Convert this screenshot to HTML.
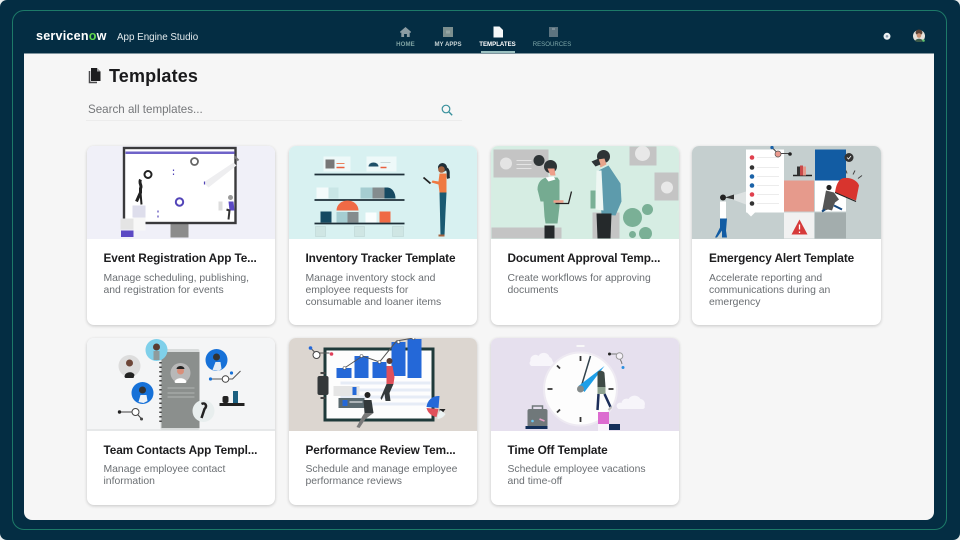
<!DOCTYPE html>
<html lang="en"><head><meta charset="utf-8"><title>Templates</title>
<style>
html,body{margin:0;padding:0;width:960px;height:540px;overflow:hidden;background:#e9eeee;font-family:"Liberation Sans",sans-serif}
*{box-sizing:border-box}
#page{position:absolute;left:0;top:0;width:960px;height:540px;filter:blur(.35px)}
.abs,.card,.t,.d,svg.ill{position:absolute}
#frame{left:0;top:0;width:960px;height:540px;background:#042d43;border-radius:7px}
#line{left:12px;top:10px;width:935px;height:520px;border:1px solid #1d7a68;border-radius:12px}
#app{left:24px;top:53px;width:910px;height:467px;background:#f6f6f6;border-radius:0 0 8px 8px;border-top:1px solid #7f949e}
.nav{position:absolute;top:41px;font-size:6.1px;font-weight:bold;text-align:center;white-space:nowrap;transform:translateX(-50%)}
.card{width:188.5px;background:#fff;border-radius:7px;box-shadow:0 1px 3px rgba(0,0,0,.2);overflow:hidden}
.card svg{position:absolute;left:0;top:0;display:block}
.t{left:17px;font-size:11.8px;letter-spacing:-.1px;font-weight:bold;color:#1c1c1e;white-space:nowrap;line-height:15px}
.d{left:17px;font-size:10.4px;color:#6b6f73;line-height:12px;white-space:nowrap}
</style></head><body>
<div id="page">
<div class="abs" id="frame"></div>
<div class="abs" id="line"></div>
<div class="abs" id="app"></div>

<div class="abs" style="left:36px;top:29px;font-size:12.6px;font-weight:bold;color:#fff;letter-spacing:.2px;line-height:15px">servicen<span style="color:#62d84e">o</span>w</div>
<div class="abs" style="left:117px;top:31px;font-size:9.8px;color:#e4ebee;line-height:13px">App Engine Studio</div>

<svg class="abs" style="left:385px;top:24px" width="190" height="16" viewBox="385 24 190 16">
<path d="M405.5 27l-5.5 4.8v.8h1.3V37h2.8v-3h2.800v3h2.800v-4.400h1.300v-.8z" fill="#8b9ca3"/>
<rect x="443" y="27" width="10" height="10" fill="#7c8f8f"/><rect x="446" y="30.500" width="4" height="3" fill="#96a6a4"/>
<path d="M493.500 26.500h6l3.500 3.500v7.500h-9.500z" fill="#f5f8f9"/>
<rect x="549" y="27" width="9" height="10" fill="#5d7480"/><rect x="552" y="28" width="3" height="2" fill="#7d909a"/>
</svg>
<div class="nav" style="left:405.500px;color:#7fa3a3;letter-spacing:.1px">HOME</div>
<div class="nav" style="left:448px;color:#c5d2d4">MY APPS</div>
<div class="nav" style="left:497.500px;color:#fff">TEMPLATES</div>
<div class="nav" style="left:552px;color:#7fa8aa;font-weight:normal">RESOURCES</div>
<div class="abs" style="left:481px;top:51px;width:34px;height:2px;background:#9bc0c0"></div>

<svg class="abs" style="left:880px;top:26px" width="50" height="20" viewBox="880 26 50 20">
<circle cx="887" cy="36.300" r="3.500" fill="#eef2f4"/><circle cx="887" cy="36.300" r="1.300" fill="#8f9fb0"/>
<circle cx="919" cy="36" r="6" fill="#e6e2dc"/><path d="M915.500 33a3.500 3.500 0 0 1 7 0l-1 1.500h-5z" fill="#5a4034"/><circle cx="919" cy="35.500" r="2.300" fill="#c98f72"/><path d="M915 41c1-3 7-3 8 0l-2 1h-4z" fill="#3c5a4a"/><circle cx="923.500" cy="40.500" r="1.300" fill="#62c370"/>
</svg>

<svg class="abs" style="left:86px;top:66px" width="16" height="18" viewBox="0 0 16 18">
<path d="M5 2h6l3.500 3.500V15H5z" fill="#1d1d1f"/><path d="M3.500 5v11.500H11" fill="none" stroke="#4b4b4d" stroke-width="1.500"/><path d="M11 2v3.500h3.500z" fill="#f6f6f6" opacity=".6"/>
</svg>
<div class="abs" style="left:109px;top:65px;font-size:18px;font-weight:bold;color:#1a1a1c;line-height:22px;letter-spacing:.15px">Templates</div>
<div class="abs" style="left:88px;top:102px;font-size:11.6px;color:#75777a;line-height:15px">Search all templates...</div>
<svg class="abs" style="left:440px;top:103px" width="14" height="14" viewBox="0 0 14 14"><circle cx="6" cy="6" r="3.800" fill="none" stroke="#38909c" stroke-width="1.200"/><path d="M9 9l3.200 3.200" stroke="#38909c" stroke-width="1.400"/></svg>
<div class="abs" style="left:86px;top:120px;width:376px;height:1px;background:#ececec"></div>

<!-- Card 1 -->
<div class="card" style="left:86.500px;top:145.500px;height:179px">
<svg width="189" height="93" viewBox="86.500 145.500 189 93">
<rect x="86" y="145" width="190" height="94" fill="#f0f0f8"/>
<rect x="170" y="222" width="18" height="15" fill="#8c8c8c"/>
<rect x="123.500" y="147.500" width="111.500" height="75" fill="#fff" stroke="#3a3a3c" stroke-width="2.400"/>
<rect x="125" y="151" width="109" height="2.500" fill="#6f63c8"/>
<path d="M203 182l30-20 3 3-28 22z" fill="#eeeef0"/><path d="M234 156l4 4" stroke="#777" stroke-width="2"/>
<circle cx="147.500" cy="174" r="3.500" fill="none" stroke="#222" stroke-width="2"/>
<circle cx="194" cy="161" r="3.500" fill="none" stroke="#666" stroke-width="1.800"/>
<circle cx="179" cy="201.500" r="3.700" fill="none" stroke="#5345b8" stroke-width="2"/>
<path d="M173 169v1.500M173 173v1.500M157.500 210v2M157.500 215v2M204 181v3" stroke="#5345b8" stroke-width="1.200"/>
<path d="M140 179c-2 4 2 6 0 9v4l-4 9" stroke="#222" stroke-width="3" fill="none"/><path d="M140 192l1 12" stroke="#222" stroke-width="2"/>
<rect x="132" y="205" width="13" height="12" fill="#dedeec"/>
<rect x="120" y="218" width="13" height="11" fill="#e4e4e4"/><rect x="133" y="217" width="12" height="13" fill="#f7f7f7"/>
<rect x="120.500" y="230" width="12.500" height="6.500" fill="#5b49c4"/>
<circle cx="230" cy="197" r="2.500" fill="#9a9a9a"/><path d="M228 201h5l1 9h-5z" fill="#5b49c4"/><path d="M226 209l3 1 -1 9" stroke="#333" stroke-width="2" fill="none"/><rect x="218" y="201" width="4" height="9" fill="#ddd"/>
</svg>
<div class="t" style="top:105px">Event Registration App Te...</div>
<div class="d" style="top:127px">Manage scheduling, publishing,<br>and registration for events</div>
</div>

<!-- Card 2 -->
<div class="card" style="left:288.500px;top:145.500px;height:179px">
<svg width="189" height="93" viewBox="288.500 145.500 189 93">
<rect x="288" y="145" width="190" height="94" fill="#d8f1f1"/>
<rect x="323" y="156" width="27" height="15" fill="#eef9f9"/><rect x="325" y="159" width="9" height="9" fill="#777"/><path d="M336 163h8" stroke="#e9825e" stroke-width="1"/><path d="M336 167h8" stroke="#e9603f" stroke-width="1.400"/>
<rect x="366" y="156" width="30" height="15" fill="#eef9f9"/><path d="M368 166a5 4 0 0 1 10 0z" fill="#1e5068"/><path d="M380 167h6" stroke="#e9603f" stroke-width="1.400"/><path d="M380 162h10" stroke="#c9d8d8" stroke-width="1"/>
<path d="M314 174h90M314 199.500h90M314 223h90" stroke="#1e2f38" stroke-width="1.800"/>
<rect x="316" y="187" width="12" height="11" fill="#f4fbfb"/><rect x="328" y="187" width="10" height="11" fill="#c9e6e6"/>
<rect x="360" y="187" width="12" height="11" fill="#a5cdd1"/><rect x="372" y="187" width="12" height="11" fill="#848c8e"/>
<path d="M384 187h3a8 11 0 0 1 8 11h-11z" fill="#164a62"/>
<rect x="320" y="211" width="11" height="11" fill="#164a62"/>
<path d="M336 210a11 10 0 0 1 22 0z" fill="#ef6a45"/><rect x="336" y="211.500" width="11" height="10.500" fill="#a5cdd1"/><rect x="347" y="211.500" width="11" height="10.500" fill="#848c8e"/>
<rect x="365" y="212" width="11" height="10" fill="#fafefe"/><rect x="379" y="211" width="11" height="11" fill="#ef6a45"/>
<g fill="#cfe6e4" stroke="#b8d2d0" stroke-width=".5"><rect x="315" y="226" width="10" height="10"/><rect x="354" y="226" width="10" height="10"/><rect x="392" y="226" width="11" height="10"/></g>
<circle cx="442" cy="167" r="4.500" fill="#1e2f38"/><circle cx="441" cy="169" r="3.300" fill="#a3623f"/><path d="M446 168c3 3 1 6 2 10" stroke="#1e2f38" stroke-width="3" fill="none"/>
<path d="M439 173h7v19h-7l-1-8-7-2 1-2 6 1z" fill="#ef7a42"/>
<path d="M439 192h7l-1 20-1 23h-4z" fill="#1a5a72"/><path d="M438 235h6" stroke="#a3623f" stroke-width="2"/>
<path d="M423 177l7 6" stroke="#222" stroke-width="1.800"/>
</svg>
<div class="t" style="top:105px">Inventory Tracker Template</div>
<div class="d" style="top:127px">Manage inventory stock and<br>employee requests for<br>consumable and loaner items</div>
</div>

<!-- Card 3 -->
<div class="card" style="left:490.500px;top:145.500px;height:179px">
<svg width="189" height="93" viewBox="490.500 145.500 189 93">
<rect x="490" y="145" width="190" height="94" fill="#d6ede3"/>
<rect x="493" y="149" width="55" height="28" fill="#c4c4c4"/><circle cx="505.500" cy="163" r="6" fill="#e4e4e4"/><path d="M516 160h15M516 164h15M516 168h15" stroke="#e4e4e4"/>
<rect x="629" y="146" width="27" height="19" fill="#c4c4c4"/><circle cx="642" cy="153" r="7.500" fill="#e8e8e8"/>
<rect x="654" y="172" width="24" height="28" fill="#c4c4c4"/><circle cx="666.500" cy="187" r="6" fill="#e8e8e8"/>
<rect x="491" y="227" width="70" height="11" fill="#c4c4c4"/>
<rect x="592" y="212" width="27" height="26" fill="#c4c4c4"/>
<circle cx="632" cy="217" r="9.500" fill="#7ab096"/><circle cx="647" cy="209" r="5.500" fill="#7ab096"/><circle cx="645" cy="233" r="6.500" fill="#7ab096"/><circle cx="632" cy="234" r="3.500" fill="#7ab096"/>
<circle cx="538.500" cy="160" r="5.500" fill="#2e3436"/><circle cx="550" cy="166" r="6.500" fill="#2e3436"/><path d="M547 168h7l1 7h-5z" fill="#ee9f8a"/>
<path d="M546 177c-5 1-9 5-9 12l3 12 3 0 1 15 1 7h12l2-17v-26l-2-3z" fill="#75ab91"/><path d="M545 177l8-1 2 3-7 2z" fill="#fff"/>
<rect x="544" y="225" width="10" height="13" fill="#25292b"/>
<path d="M553 201h10" stroke="#ee9f8a" stroke-width="2.500"/><path d="M555 203h13l3-12" stroke="#222" stroke-width="1.300" fill="none"/>
<circle cx="603" cy="156" r="6.500" fill="#2e3436"/><path d="M597 159l7-1 2 6-6 3z" fill="#e7a58c"/><path d="M591 161l7-3 2 6-5 2z" fill="#2e3436"/>
<path d="M598 170l10-5 12 18 1 18-6 14-14-1z" fill="#5d9bac"/><path d="M596 170l5 0 2 40-8-1z" fill="#eef7f3"/>
<rect x="590" y="190" width="5" height="18" fill="#7ab096"/>
<path d="M596 213h15l-1 25h-13z" fill="#25292b"/>
</svg>
<div class="t" style="top:105px">Document Approval Temp...</div>
<div class="d" style="top:127px">Create workflows for approving<br>documents</div>
</div>

<!-- Card 4 -->
<div class="card" style="left:692px;top:145.500px;height:179px">
<svg width="189" height="93" viewBox="692 145.500 189 93">
<rect x="691" y="145" width="191" height="94" fill="#c5cfcf"/>
<path d="M727 197l19-6v13z" fill="#dde2e2"/>
<rect x="746" y="149" width="38" height="63" fill="#fff"/><path d="M747 212l4 4 4-4z" fill="#fff"/>
<g><circle cx="752" cy="157" r="2.300" fill="#e0404e"/><circle cx="752" cy="167" r="2.300" fill="#333"/><circle cx="752" cy="176" r="2.300" fill="#1b62a8"/><circle cx="752" cy="185" r="2.300" fill="#1b62a8"/><circle cx="752" cy="194" r="2.300" fill="#e0404e"/><circle cx="752" cy="203" r="2.300" fill="#333"/></g>
<path d="M757 157h22M757 167h22M757 176h22M757 185h22M757 194h22M757 203h22" stroke="#ececec"/>
<path d="M772 147l6 6h12" stroke="#444" fill="none"/><circle cx="772" cy="147" r="1.700" fill="#1b62a8"/><circle cx="778" cy="153.500" r="3" fill="#eb9a8e" stroke="#555" stroke-width=".7"/><circle cx="790" cy="153.500" r="1.800" fill="#222"/>
<rect x="815" y="149" width="31" height="31" fill="#125ca3"/><circle cx="849" cy="157" r="4.500" fill="#333"/><path d="M847 157l1.500 1.500 2.500-3" stroke="#fff" fill="none" stroke-width=".8"/>
<rect x="784" y="180" width="30" height="31" fill="#e69a8c"/><rect x="815" y="180" width="31" height="31" fill="#fff"/>
<rect x="784" y="212" width="30" height="26" fill="#f1f1f1"/><rect x="815" y="212" width="31" height="26" fill="#a3adad"/>
<path d="M799.500 219l8 15h-16z" fill="#d63a3a"/><path d="M799.500 224v5M799.500 231v1.500" stroke="#fff" stroke-width="1.300"/>
<path d="M793 175h19" stroke="#222" stroke-width="1.600"/><rect x="797" y="166" width="3" height="9" fill="#333"/><rect x="800" y="165" width="3" height="10" fill="#c94a4a"/><rect x="803" y="166" width="3" height="9" fill="#e69a8c"/>
<path d="M835 192c1-7 3-12 7-14 6-2 15 1 17 7l-3 15z" fill="#d8342e"/><path d="M835 192l21 9" stroke="#222" stroke-width="1.200"/>
<path d="M847 173l-1-3M853 174l2-4M858 178l4-3" stroke="#444"/>
<circle cx="829" cy="187" r="2.600" fill="#222"/><path d="M826 190l8 2 5 7-4 3-3 8-4-1-6 2z" fill="#555"/><path d="M825 209l-3 2M842 209l-8-4" stroke="#14487f" stroke-width="2"/>
<circle cx="723" cy="197" r="3" fill="#222"/><path d="M725 197l9-3v5z" fill="#333"/><path d="M720 201h6v17h-6z" fill="#fff"/><path d="M720 218h7l-1 12 1 7h-5v-7l-5 7h-2l5-10z" fill="#125ca3"/>
</svg>
<div class="t" style="top:105px">Emergency Alert Template</div>
<div class="d" style="top:127px">Accelerate reporting and<br>communications during an<br>emergency</div>
</div>

<!-- Card 5 -->
<div class="card" style="left:86.500px;top:338px;height:167px">
<svg width="189" height="93" viewBox="86.500 338 189 93">
<rect x="86" y="337" width="190" height="95" fill="#f4f5f6"/>
<rect x="86" y="429" width="190" height="3" fill="#e6e8e9"/>
<rect x="160" y="349" width="39" height="81" rx="2" fill="#d9dcdc"/><rect x="161" y="352" width="38" height="76" fill="#8b8f8d"/>
<path d="M160 362v62" stroke="#444" stroke-width="2.500" stroke-dasharray="1.500 3"/>
<circle cx="180" cy="373" r="10" fill="#b8b8b8"/><circle cx="180" cy="371" r="3.500" fill="#d98f7a"/><path d="M176 369a4 3 0 0 1 8 0z" fill="#222"/><path d="M174 382c1-5 11-5 12 0l-1 1h-10z" fill="#fff"/>
<path d="M167 388h27M167 393h27M167 397h27" stroke="#a9adab" stroke-width="1.200"/>
<circle cx="156" cy="350" r="11" fill="#7fd0ea"/><circle cx="156" cy="347" r="3.500" fill="#5a3c32"/><rect x="153" y="351" width="6" height="9" fill="#8f9b9c"/>
<circle cx="129" cy="366" r="11" fill="#ddd"/><circle cx="129" cy="363" r="3.500" fill="#6d4638"/><path d="M124 377c0-6 9-6 10-2l-1 3h-8z" fill="#222"/>
<circle cx="216" cy="360" r="11" fill="#1671d8"/><circle cx="216" cy="357" r="3.500" fill="#333"/><path d="M212 370l3-8h5l1 7-3 2z" fill="#e2ecf5"/>
<circle cx="142" cy="393" r="11" fill="#1671d8"/><circle cx="142" cy="390" r="3.500" fill="#333"/><path d="M138 402l2-7h6l1 6-4 2z" fill="#eef2f6"/>
<circle cx="203" cy="411" r="11" fill="#e8eeee"/><path d="M201 404c4-2 6 2 3 5l-3 9" stroke="#222" stroke-width="2.500" fill="none"/>
<path d="M210 379h22l8-8" stroke="#555" fill="none"/><circle cx="210" cy="379" r="1.600" fill="#1671d8"/><circle cx="225" cy="379" r="3.300" fill="#fff" stroke="#444"/><circle cx="231" cy="373" r="1.600" fill="#1671d8"/>
<path d="M119 412h16l7 8" stroke="#444" fill="none"/><circle cx="119" cy="412" r="1.700" fill="#222"/><circle cx="135" cy="412" r="3.500" fill="#fff" stroke="#444"/><circle cx="141" cy="419" r="1.500" fill="#444"/>
<rect x="219" y="403" width="25" height="3" fill="#222"/><rect x="222" y="396" width="6" height="7" rx="2" fill="#222"/><rect x="232.500" y="391" width="5" height="12" fill="#1b5f80"/>
</svg>
<div class="t" style="top:105px">Team Contacts App Templ...</div>
<div class="d" style="top:126px">Manage employee contact<br>information</div>
</div>

<!-- Card 6 -->
<div class="card" style="left:288.500px;top:338px;height:167px">
<svg width="189" height="93" viewBox="288.500 338 189 93">
<rect x="288" y="337" width="190" height="95" fill="#dcd6d0"/>
<rect x="324.500" y="349" width="108" height="71" fill="#fdfdfd" stroke="#1f3a3a" stroke-width="3"/>
<path d="M340 383h90M340 390h90M340 397h90M340 404h90" stroke="#e6ecf6" stroke-width="3"/>
<rect x="336" y="368" width="15" height="10" fill="#2468d8"/><rect x="354" y="356" width="14" height="22" fill="#2468d8"/><rect x="372" y="362" width="14" height="16" fill="#2468d8"/><rect x="391" y="342" width="14" height="34" fill="#2468d8"/><rect x="407" y="339" width="14" height="39" fill="#2468d8"/>
<path d="M344 368l18-12 17 6 17-21 17-3" stroke="#555" fill="none"/>
<g fill="#fff" stroke="#555" stroke-width=".6"><circle cx="344" cy="368" r="1.500"/><circle cx="361" cy="356" r="1.500"/><circle cx="379" cy="362" r="1.500"/><circle cx="398" cy="342" r="1.500"/><circle cx="413" cy="338" r="1.500"/></g>
<rect x="317" y="376" width="11" height="19" rx="2" fill="#34383a"/><path d="M320 373h5M320 398h5" stroke="#444" stroke-width="2"/>
<path d="M310 348l5 5h14" stroke="#555" fill="none"/><circle cx="310" cy="348" r="1.800" fill="#2468d8"/><circle cx="316" cy="355" r="3.500" fill="#fff" stroke="#444"/><circle cx="331" cy="354" r="1.800" fill="#e0405a"/>
<rect x="333" y="386" width="26" height="10" fill="#e5e5e5"/><rect x="352" y="387" width="4" height="8" fill="#2468d8"/>
<rect x="338" y="398" width="26" height="10" fill="#5b6a70"/><rect x="342" y="400" width="5" height="6" fill="#2468d8"/><path d="M349 402h13" stroke="#fff"/>
<circle cx="389" cy="361" r="3" fill="#5a3c32"/><path d="M386 366h6l2 11-1 7h-7z" fill="#e0505a"/><path d="M386 384h7l-4 9 1 8h-5l-1-7-3 6-1-2z" fill="#33393b"/>
<circle cx="367" cy="395" r="3" fill="#222"/><path d="M363 400h8l2 13h-9z" fill="#33393b"/><path d="M364 413h9l-8 6-6 9-3-1 6-11z" fill="#7a7a7a"/>
<path d="M426 407a12 12 0 0 1 13-11l-1 12z" fill="#2468d8"/><path d="M426 408l12 1 -2 8a12 12 0 0 1-10-9z" fill="#e0505a"/><path d="M439 409h6l-5 7z" fill="#222"/><path d="M437 416l3-6 5 4a10 10 0 0 1-8 5z" fill="#ecf3f3"/>
</svg>
<div class="t" style="top:105px">Performance Review Tem...</div>
<div class="d" style="top:126px">Schedule and manage employee<br>performance reviews</div>
</div>

<!-- Card 7 -->
<div class="card" style="left:490.500px;top:338px;height:167px">
<svg width="189" height="93" viewBox="490.500 338 189 93">
<rect x="490" y="337" width="190" height="95" fill="#e6e0ee"/>
<path d="M530 361a5 5 0 0 1 8-5 6 6 0 0 1 11 1 5 5 0 0 1 3 4 3 3 0 0 1-3 5h-18a3 3 0 0 1-1-5z" fill="#f7f5fa"/>
<path d="M621 403a5 5 0 0 1 7-4 7 7 0 0 1 12 0 5 5 0 0 1 4 7 2 2 0 0 1-2 3h-24a3 3 0 0 1 3-6z" fill="#f7f5fa"/>
<circle cx="580" cy="389" r="36.500" fill="#fdfdfd" stroke="#eeeaf2" stroke-width="2"/>
<rect x="576" y="345" width="8" height="2" fill="#f8f8f8"/>
<g stroke="#333" stroke-width="1.800"><path d="M580 356v5M580 417v5M547 389h5M608 389h5M556.500 365.500l3 3M556.500 412.500l3-3"/></g>
<path d="M580 389l10-33" stroke="#33434d" stroke-width="1.500"/>
<path d="M578 386l26-20-20 26z" fill="#1e9fe8"/>
<circle cx="580" cy="389" r="3.500" fill="#838a8a"/>
<path d="M597 373c0-3 6-3 7 0l1 14h-8z" fill="#3e4a46"/><rect x="597" y="387" width="8" height="7" fill="#8ea290"/>
<path d="M598 394l-1 16M604 394l6 13" stroke="#1c2e5a" stroke-width="2.500" fill="none"/><path d="M608 410l3-3" stroke="#bbb" stroke-width="2"/>
<rect x="597.500" y="412" width="11" height="12" fill="#dc6cd0"/><rect x="597.500" y="424" width="11" height="7" fill="#f8f4fb"/><rect x="608.500" y="424" width="11" height="6" fill="#14305a"/>
<path d="M609 354h8l4 8 .5 2" stroke="#777" fill="none"/><circle cx="609" cy="354" r="1.500" fill="#222"/><circle cx="619" cy="356" r="3.300" fill="#f5f1f8" stroke="#999"/><circle cx="622.500" cy="367.500" r="1.500" fill="#2b8fe0"/>
<rect x="527" y="409" width="20" height="18" rx="2" fill="#70787a"/><path d="M532 409v-3h10v3" stroke="#70787a" stroke-width="1.500" fill="none"/><rect x="525" y="426" width="22" height="3" fill="#14305a"/><circle cx="532" cy="421" r="1.300" fill="#6cc6f0"/><path d="M539 419l5 2" stroke="#e8a0c8" stroke-width="1.500"/>
</svg>
<div class="t" style="top:105px">Time Off Template</div>
<div class="d" style="top:126px">Schedule employee vacations<br>and time-off</div>
</div>
</div>
</body></html>
